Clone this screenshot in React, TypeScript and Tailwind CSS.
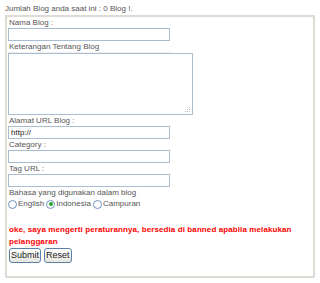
import React from "react";

function Label({ children }: { children: React.ReactNode }) {
  return (
    <div className="h-[11px] pl-[1px] text-[8px] leading-[11px] text-[#555]">
      {children}
    </div>
  );
}

function TextInput({ value }: { value?: string }) {
  return (
    <div className="h-[13px] w-[162px] border border-[#a9bdd2] bg-white pl-[2px] text-[8px] leading-[11px] text-[#222]">
      {value}
    </div>
  );
}

function Radio({ checked, label }: { checked?: boolean; label: string }) {
  return (
    <span className="flex items-center">
      <span className="flex h-[9px] w-[9px] items-center justify-center rounded-full border border-[#6f93c0] bg-white">
        {checked && <span className="h-[4px] w-[4px] rounded-full bg-[#2aa52a]" />}
      </span>
      <span className="ml-[1px] mr-[2px]">{label}</span>
    </span>
  );
}

function Button({ children }: { children: React.ReactNode }) {
  return (
    <div className="flex h-[15px] items-center rounded-[3px] border border-[#5b7fa8] bg-gradient-to-b from-white to-[#e6e6df] px-[1px] text-[9px] text-[#222]">
      {children}
    </div>
  );
}

export default function App() {
  return (
    <div
      className="h-[283px] w-[320px] bg-white"
      style={{ fontFamily: '"Liberation Sans", Arial, sans-serif' }}
    >
      <div className="pl-[5px] pt-[3px] text-[8px] leading-[12px] text-[#555]">
        Jumlah Blog anda saat ini : 0 Blog !.
      </div>
      <div className="ml-[5px] h-[263px] w-[310px] border-2 border-[#dcdcd4] pl-[1px]">
        <Label>Nama Blog :</Label>
        <TextInput />
        <div className="w-[162px] border-b border-[#eeeeee]">
          <Label>Keterangan Tentang Blog</Label>
        </div>
        <div className="relative h-[62px] w-[185px] border border-[#a9bdd2] bg-white">
          <svg className="absolute bottom-[1px] right-[1px]" width="8" height="8" viewBox="0 0 8 8">
            <g fill="#b8b8b0">
              <rect x="6" y="2" width="1" height="1" />
              <rect x="4" y="4" width="1" height="1" />
              <rect x="6" y="4" width="1" height="1" />
              <rect x="2" y="6" width="1" height="1" />
              <rect x="4" y="6" width="1" height="1" />
              <rect x="6" y="6" width="1" height="1" />
            </g>
          </svg>
        </div>
        <Label>Alamat URL Blog :</Label>
        <TextInput value="http://" />
        <Label>Category :</Label>
        <TextInput />
        <Label>Tag URL :</Label>
        <TextInput />
        <Label>Bahasa yang digunakan dalam blog</Label>
        <div className="flex h-[12px] items-center text-[8px] text-[#555]">
          <Radio label="English" />
          <Radio checked label="Indonesia" />
          <Radio label="Campuran" />
        </div>
        <div className="mt-[14px] pl-[1px] text-[8px] font-bold leading-[12px] tracking-[0.1px] text-[#ff0000]">
          oke, saya mengerti peraturannya, bersedia di banned apabila melakukan pelanggaran
        </div>
        <div className="flex gap-[3px] pl-[1px]">
          <Button>Submit</Button>
          <Button>Reset</Button>
        </div>
      </div>
    </div>
  );
}
